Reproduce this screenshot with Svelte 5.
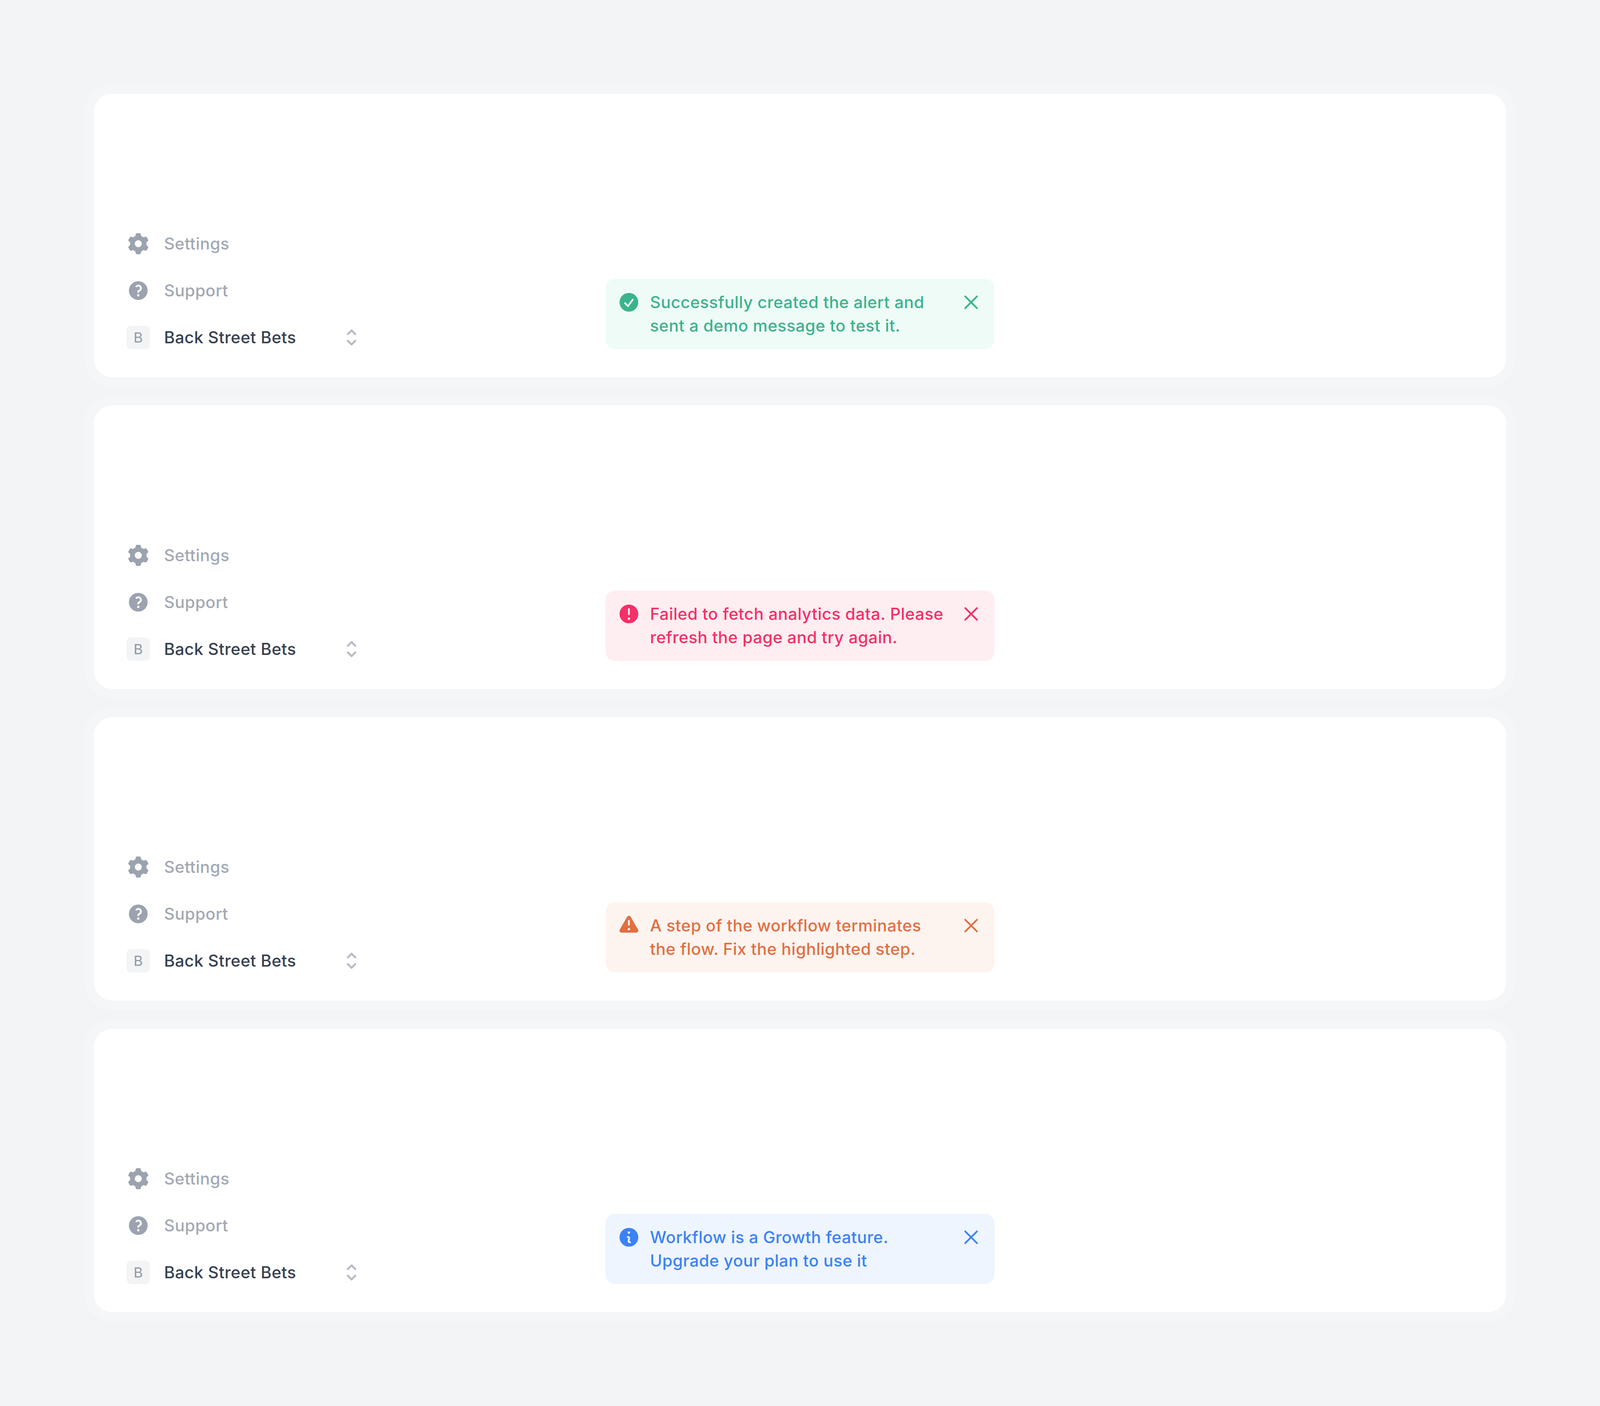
<script>
  const toasts = [
    { kind: 'success', lines: ['Successfully created the alert and', 'sent a demo message to test it.'],
      icon: 'M10 18a8 8 0 100-16 8 8 0 000 16zm3.857-9.809a.75.75 0 00-1.214-.882l-3.483 4.79-1.88-1.88a.75.75 0 10-1.06 1.061l2.5 2.5a.75.75 0 001.137-.089l4-5.5z' },
    { kind: 'error', lines: ['Failed to fetch analytics data. Please', 'refresh the page and try again.'],
      icon: 'M18 10a8 8 0 11-16 0 8 8 0 0116 0zm-8-5a.75.75 0 01.75.75v4.5a.75.75 0 01-1.5 0v-4.5A.75.75 0 0110 5zm0 10a1 1 0 100-2 1 1 0 000 2z' },
    { kind: 'warning', lines: ['A step of the workflow terminates', 'the flow. Fix the highlighted step.'],
      icon: 'M8.485 2.495c.673-1.167 2.357-1.167 3.03 0l6.28 10.875c.673 1.167-.17 2.625-1.516 2.625H3.72c-1.347 0-2.189-1.458-1.515-2.625L8.485 2.495zM10 5a.75.75 0 01.75.75v3.5a.75.75 0 01-1.5 0v-3.5A.75.75 0 0110 5zm0 9a1 1 0 100-2 1 1 0 000 2z' },
    { kind: 'info', lines: ['Workflow is a Growth feature.', 'Upgrade your plan to use it'],
      icon: 'M18 10a8 8 0 11-16 0 8 8 0 0116 0zm-7-4a1 1 0 11-2 0 1 1 0 012 0zM9 9a.75.75 0 000 1.5h.253a.25.25 0 01.244.304l-.459 2.066A1.75 1.75 0 0010.747 15H11a.75.75 0 000-1.5h-.253a.25.25 0 01-.244-.304l.459-2.066A1.75 1.75 0 009.253 9H9z' }
  ];
</script>

<main class="page">
  {#each toasts as t}
    <section class="card">
      <nav class="side">
        <div class="row">
          <svg class="ico" viewBox="0 0 20 20" fill="currentColor"><path fill-rule="evenodd" clip-rule="evenodd" d="M7.84 1.804A1 1 0 018.82 1h2.36a1 1 0 01.98.804l.331 1.652a6.993 6.993 0 011.929 1.115l1.598-.54a1 1 0 011.186.447l1.18 2.044a1 1 0 01-.205 1.251l-1.267 1.113a7.047 7.047 0 010 2.228l1.267 1.113a1 1 0 01.206 1.25l-1.18 2.045a1 1 0 01-1.187.447l-1.598-.54a6.993 6.993 0 01-1.929 1.115l-.33 1.652a1 1 0 01-.98.804H8.82a1 1 0 01-.98-.804l-.331-1.652a6.993 6.993 0 01-1.929-1.115l-1.598.54a1 1 0 01-1.186-.447l-1.18-2.044a1 1 0 01.205-1.251l1.267-1.114a7.05 7.05 0 010-2.227L1.821 7.773a1 1 0 01-.206-1.25l1.18-2.045a1 1 0 011.187-.447l1.598.54A6.993 6.993 0 017.51 3.456l.33-1.652zM10 13a3 3 0 100-6 3 3 0 000 6z"/></svg>
          <span class="muted">Settings</span>
        </div>
        <div class="row">
          <svg class="ico" viewBox="0 0 20 20" fill="currentColor"><path fill-rule="evenodd" clip-rule="evenodd" d="M18 10a8 8 0 11-16 0 8 8 0 0116 0zM8.94 6.94a.75.75 0 11-1.061-1.061 3 3 0 112.871 5.026v.345a.75.75 0 01-1.5 0v-.5c0-.72.57-1.172 1.081-1.287A1.5 1.5 0 108.94 6.94zM10 15a1 1 0 100-2 1 1 0 000 2z"/></svg>
          <span class="muted">Support</span>
        </div>
        <div class="row">
          <span class="badge">B</span>
          <span class="team">Back Street Bets</span>
          <svg class="updown" viewBox="0 0 60 60" fill="none" stroke="currentColor" stroke-width="5" stroke-linecap="round" stroke-linejoin="round"><path d="M20.5 21.500L30 12l9.500 9.500M20.500 38.500L30 48l9.500-9.500"/></svg>
        </div>
      </nav>
      <div class="toast {t.kind}">
        <svg class="ico" viewBox="0 0 20 20" fill="currentColor"><path fill-rule="evenodd" clip-rule="evenodd" d={t.icon}/></svg>
        <p class="msg">{t.lines[0]}<br />{t.lines[1]}</p>
        <svg class="ico close" viewBox="0 0 24 24" fill="none" stroke="currentColor" stroke-width="1.8" stroke-linecap="round" stroke-linejoin="round"><path d="M6 18L18 6M6 6l12 12"/></svg>
      </div>
      <div></div>
    </section>
  {/each}
</main>

<style>
  :global(body) {
    margin: 0;
    background: #f3f4f6;
    font-family: Inter, "Liberation Sans", sans-serif;
  }
  .page {
    box-sizing: border-box;
    padding: 240px;
    display: flex;
    flex-direction: column;
    gap: 72px;
  }
  .card {
    height: 726px;
    box-sizing: border-box;
    padding: 0 84px 72px;
    background: #fff;
    border-radius: 48px;
    box-shadow: 0 0 0 24px #f4f6f7;
    display: grid;
    grid-template-columns: 1fr 996px 1fr;
    align-items: end;
  }
  .side {
    width: 606px;
    display: flex;
    flex-direction: column;
    gap: 60px;
  }
  .row {
    height: 60px;
    display: flex;
    align-items: center;
    gap: 36px;
    font-size: 42px;
    line-height: 60px;
    font-weight: 500;
    letter-spacing: 0.45px;
  }
  .ico {
    width: 60px;
    height: 60px;
    flex: none;
    color: #9ca3af;
  }
  .muted { color: #a3a9b4; }
  .team { color: #374151; flex: 1; }
  .badge {
    width: 60px;
    height: 60px;
    flex: none;
    border-radius: 12px;
    background: #f3f4f6;
    color: #8f98a6;
    font-size: 36px;
    font-weight: 400;
    text-align: center;
  }
  .updown { width: 60px; height: 60px; flex: none; color: #b6bbc4; }
  .toast {
    box-sizing: border-box;
    padding: 30px;
    border-radius: 24px;
    display: flex;
    gap: 24px;
    font-size: 42px;
    line-height: 60px;
    font-weight: 500;
    letter-spacing: 0.5px;
  }
  .msg { margin: 0; flex: 1; white-space: nowrap; }
  .toast .ico { color: inherit; }
  .success { background: #effbf7; color: #3bb48c; }
  .error { background: #ffeef1; color: #f43068; }
  .warning { background: #fdf4f0; color: #e26f42; }
  .info { background: #eef5ff; color: #3b82f6; }
</style>
